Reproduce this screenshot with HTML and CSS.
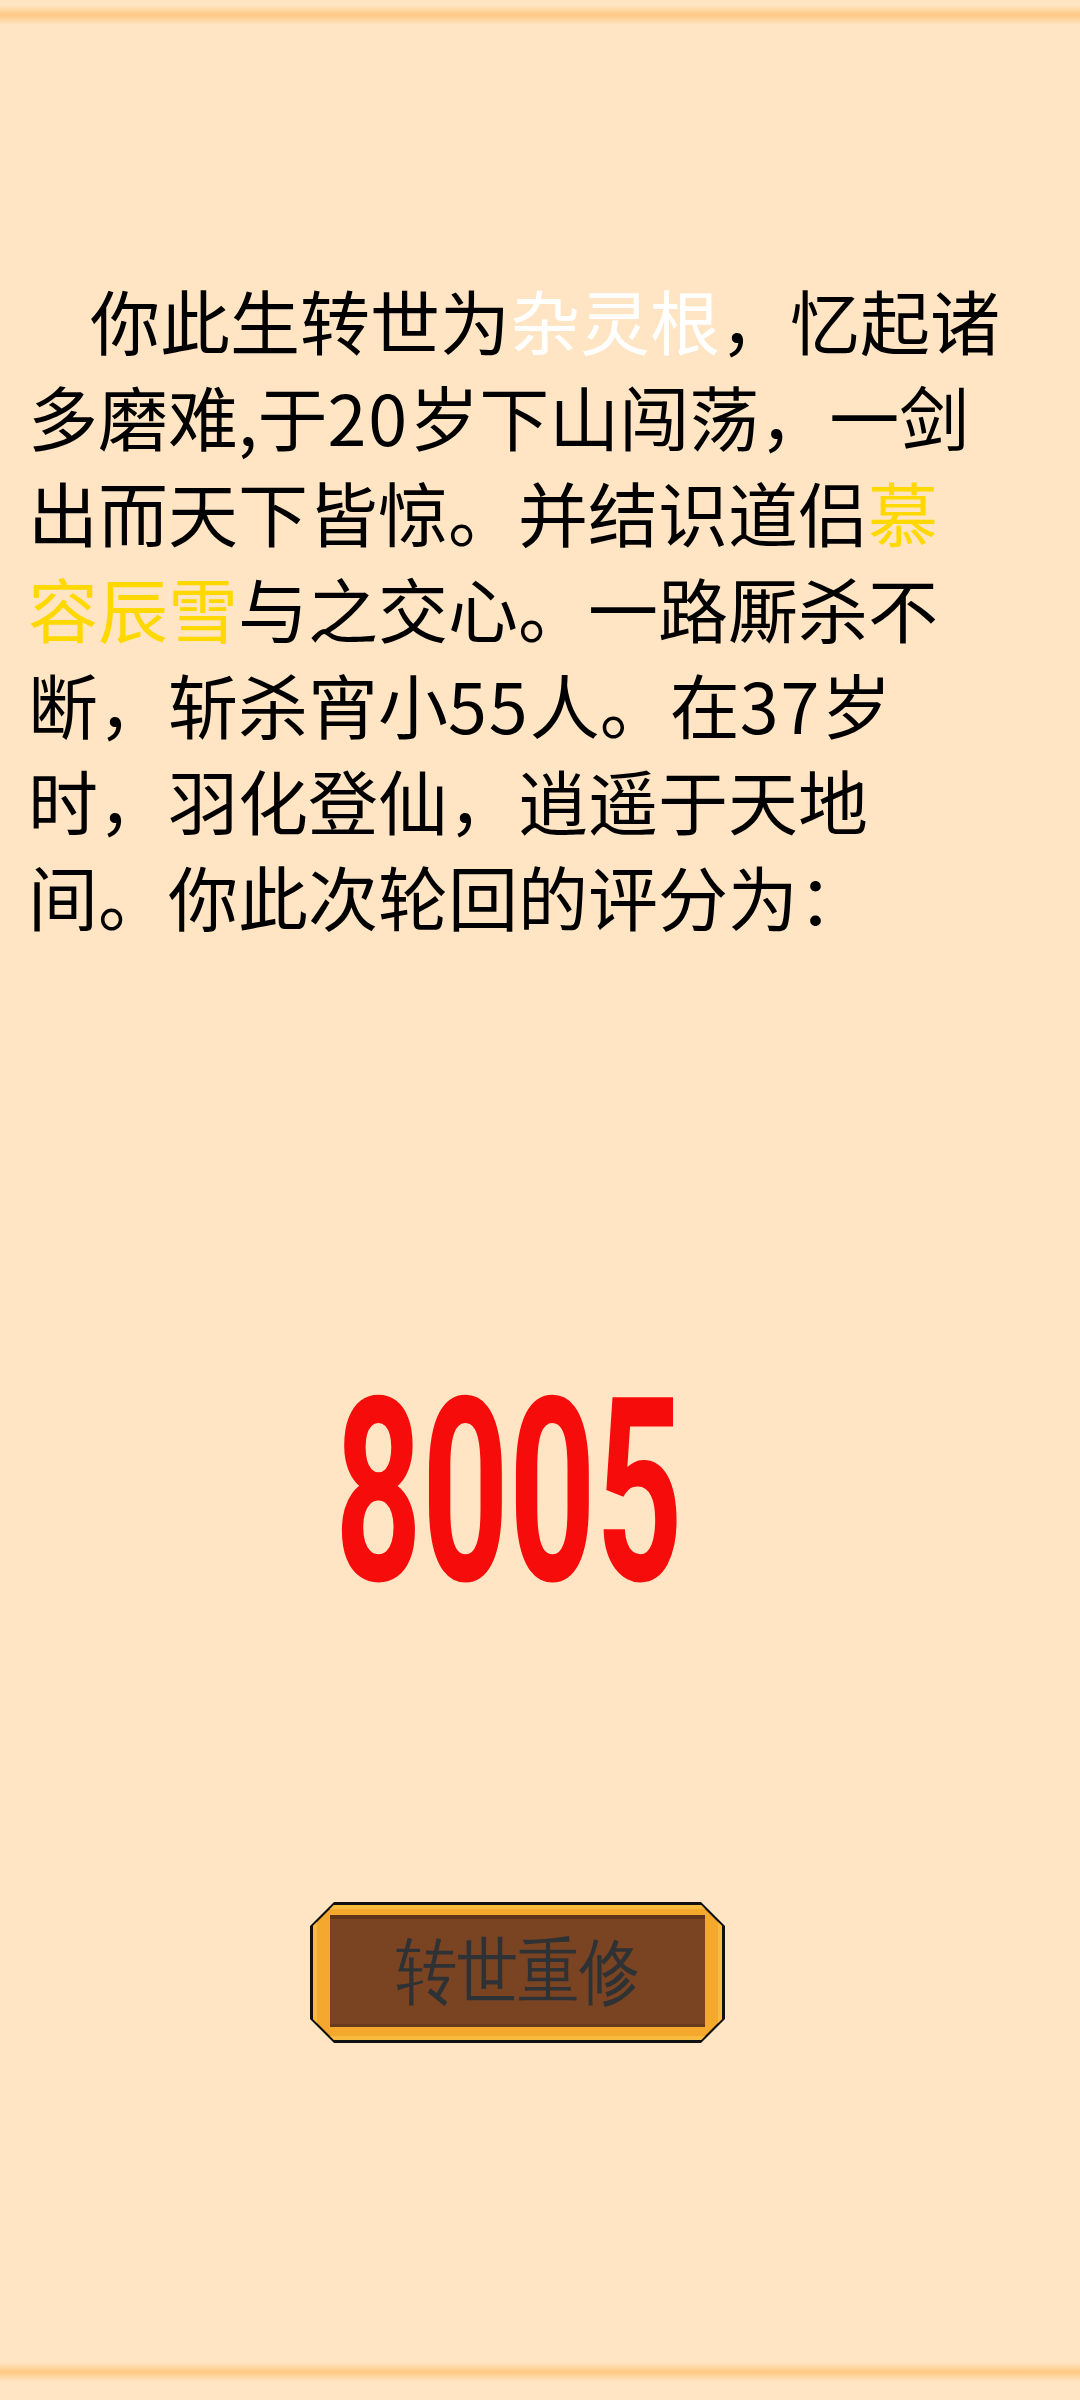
FILE: index.html
```html
<!DOCTYPE html>
<html lang="zh">
<head>
    <meta charset="UTF-8">
    <meta name="viewport" content="width=device-width, initial-scale=1.0">
    <title>轮回评分</title>
    <link rel="stylesheet" href="styles.css">
</head>
<body>
    <div class="page">
        <div class="edge edge-top"></div>

        <div class="content">
            <p class="story">你此生转世为<span class="white">杂灵根</span>，忆起诸多磨难,于<span class="num">20</span>岁下山闯荡，一剑出而天下皆惊。并结识道侣<span class="gold">慕容辰雪</span>与之交心。一路厮杀不断，斩杀宵小<span class="num">55</span>人。在<span class="num">37</span>岁时，羽化登仙，逍遥于天地间。你此次轮回的评分为：</p>

            <div class="score"><span>8005</span></div>

            <button class="rebirth" onclick="location.reload()">
                <span class="rim"><span class="face"><span class="label">转世重修</span></span></span>
            </button>
        </div>

        <div class="edge edge-bottom"></div>
    </div>
</body>
</html>
```

FILE: styles.css
```css
body {
    margin: 0;
    background-color: #ffe5c4;
    font-family: "Noto Sans CJK SC", "Noto Sans", sans-serif;
}
.page {
    height: 2400px;
    display: flex;
    flex-direction: column;
}
.edge {
    height: 20px;
    background: linear-gradient(to bottom, rgba(255, 200, 128, 0), #ffc884 50%, rgba(255, 200, 128, 0));
}
.edge-top {
    margin-top: 5px;
}
.edge-bottom {
    margin-top: auto;
    margin-bottom: 18px;
}
.content {
    width: 975px;
    margin-left: 28px;
}
.story {
    margin: 247px 0 0;
    font-size: 70px;
    line-height: 96px;
    text-indent: 62px;
    color: #000;
}
.white {
    color: #fff;
}
.gold {
    color: #ffd800;
}
.num {
    letter-spacing: 2px;
}
.score {
    width: 962px;
    margin-top: 420px;
    height: 257px;
    text-align: center;
    font-family: Roboto, "Liberation Sans", sans-serif;
    font-weight: bold;
    font-size: 257px;
    line-height: 257px;
    color: #f70c0c;
}
.score span {
    display: inline-block;
    transform: scaleX(0.59);
}
.rebirth {
    display: block;
    width: 415px;
    height: 141px;
    margin: 281px 0 0 282px;
    padding: 3px;
    border: 0;
    background: #111;
    cursor: pointer;
    clip-path: polygon(24px 0, calc(100% - 24px) 0, 100% 24px, 100% calc(100% - 24px), calc(100% - 24px) 100%, 24px 100%, 0 calc(100% - 24px), 0 24px);
}
.rim {
    display: block;
    height: 100%;
    box-sizing: border-box;
    padding: 10px 17px 13px 17px;
    background: #f4a82e;
    box-shadow: inset 0 0 0 4px #f9bb3e;
    clip-path: polygon(21px 0, calc(100% - 21px) 0, 100% 21px, 100% calc(100% - 21px), calc(100% - 21px) 100%, 21px 100%, 0 calc(100% - 21px), 0 21px);
}
.face {
    display: flex;
    align-items: center;
    justify-content: center;
    height: 100%;
    background: #7a4423;
    box-shadow: inset 0 4px 0 #5f3219, inset 0 -3px 0 #6a3a1e;
}
.label {
    display: inline-block;
    font-size: 72px;
    line-height: 1;
    color: #2f3234;
    transform: scaleX(0.85);
}
```
